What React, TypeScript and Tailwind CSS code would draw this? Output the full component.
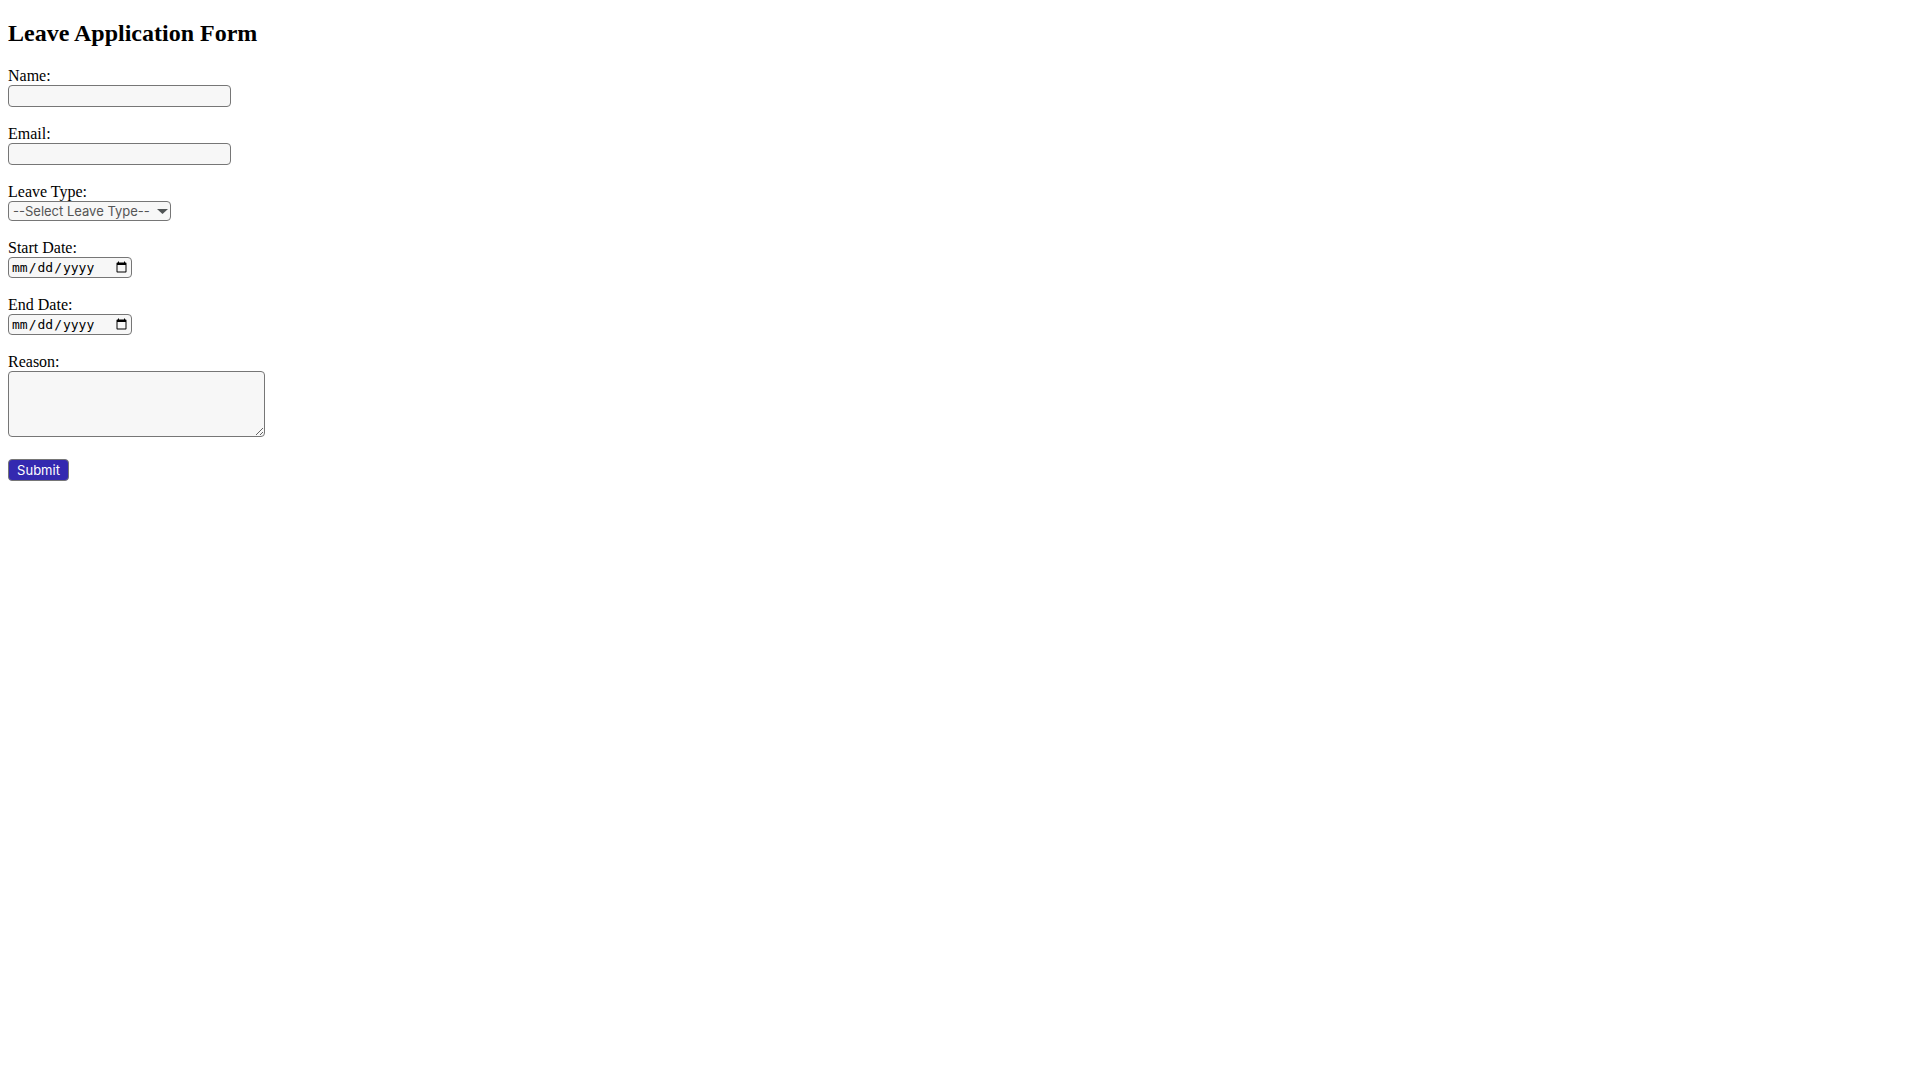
import React from "react";

const label = "block text-base leading-[18px]";
const field = "block rounded-[4px] border border-[#767676] bg-[#f7f7f7]";
const dateField = field + " h-[21px] w-[124px] pl-0.5 pr-px text-[13px] font-['DejaVu_Sans_Mono',monospace]";

export default function App() {
  return (
    <main className="p-2 text-black font-['Liberation_Serif',serif]">
      <h2 className="mt-3 mb-5 text-2xl leading-[27px] font-bold">Leave Application Form</h2>
      <form className="flex flex-col items-start gap-[18px]">
        <div>
          <label className={label} htmlFor="name">Name:</label>
          <input className={field + " h-[22px] w-[223px]"} id="name" type="text" />
        </div>
        <div>
          <label className={label} htmlFor="email">Email:</label>
          <input className={field + " h-[22px] w-[223px]"} id="email" type="email" />
        </div>
        <div>
          <label className={label} htmlFor="type">Leave Type:</label>
          <div className="relative">
            <select id="type" className={field + " h-5 w-[163px] appearance-none pl-1 text-[13px] leading-4 text-[#555] font-['Inter',sans-serif]"}>
              <option>--Select Leave Type--</option>
              <option>Sick Leave</option>
              <option>Casual Leave</option>
            </select>
            <svg className="pointer-events-none absolute top-2 right-[3px] h-[5px] w-[11px]" viewBox="0 0 11 5"><path d="M0 0h11L5.500 5z" fill="#505455" /></svg>
          </div>
        </div>
        <div>
          <label className={label} htmlFor="start">Start Date:</label>
          <input className={dateField} id="start" type="date" />
        </div>
        <div>
          <label className={label} htmlFor="end">End Date:</label>
          <input className={dateField} id="end" type="date" />
        </div>
        <div className="mb-1">
          <label className={label} htmlFor="reason">Reason:</label>
          <textarea className={field + " h-[66px] w-[257px] p-0.5"} id="reason" />
        </div>
        <button type="submit" className="h-[22px] w-[61px] rounded-[4px] border border-[#767676] bg-[#3429b0] text-[13px] leading-4 text-white font-['Inter',sans-serif]">Submit</button>
      </form>
    </main>
  );
}
